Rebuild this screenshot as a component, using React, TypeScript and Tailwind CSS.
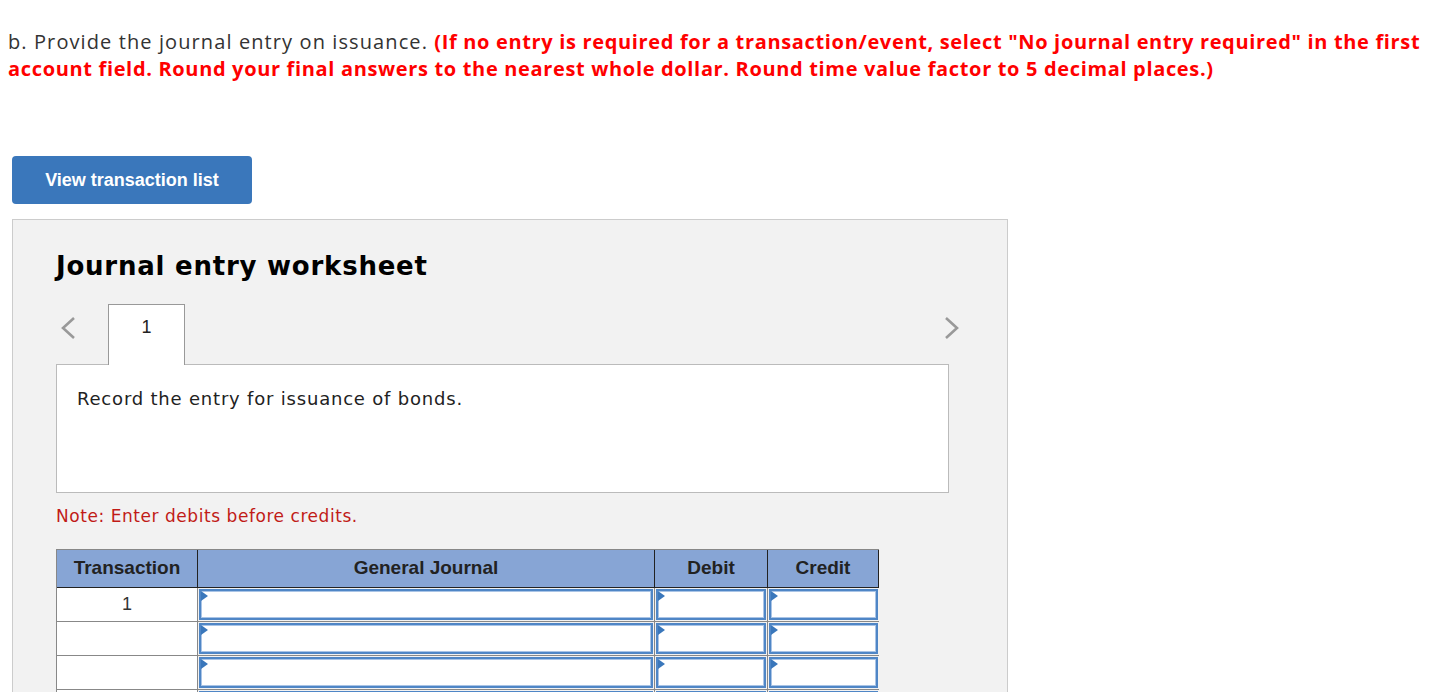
import React from "react";

const Tri = () => (
  <div className="absolute left-0 top-0 w-0 h-0 border-y-[5px] border-y-transparent border-l-[7px] border-l-[#3a77bb]" />
);

const InputCell = ({ w }: { w: string }) => (
  <div className={`${w} h-full border-l border-[#888] p-px`}>
    <div className="relative h-full bg-white border-2 border-[#4f86c6] shadow-[inset_0_0_0_1px_#a9c4e6]">
      <Tri />
    </div>
  </div>
);

const Row = ({ n }: { n?: string }) => (
  <div className="flex h-[34px] border-b border-[#888]">
    <div className="w-[140px] shrink-0 bg-white flex items-center justify-center text-[18px] text-[#333]" style={{ fontFamily: "'Liberation Sans', Arial, sans-serif" }}>
      {n}
    </div>
    <InputCell w="w-[457px] shrink-0" />
    <InputCell w="w-[113px] shrink-0" />
    <InputCell w="w-[112px] shrink-0" />
  </div>
);

export default function App() {
  return (
    <div className="bg-white min-h-[692px] text-[#333]">
      <div className="pl-[8px] pr-0 pt-[28px] text-[20px] leading-[27px] w-[1430px]" style={{ fontFamily: "'Open Sans', sans-serif" }}>
        <span className="text-[#333] tracking-[1.1px]">b. Provide the journal entry on issuance. </span>
        <span className="text-[#f00] font-bold tracking-[0.66px]">
          (If no entry is required for a transaction/event, select "No journal entry required" in the first account field. Round your final answers to the nearest whole dollar. Round time value factor to 5 decimal places.)
        </span>
      </div>

      <div className="pl-[12px] mt-[74px]">
        <button className="w-[240px] h-[48px] rounded-[4px] bg-[#3a77bb] text-white font-bold text-[18px]" style={{ fontFamily: "'Liberation Sans', Arial, sans-serif" }}>
          View transaction list
        </button>
      </div>

      <div className="ml-[12px] mt-[15px] w-[996px] bg-[#f2f2f2] border border-[#ccc] pl-[43px] pt-[31px] pb-[20px]" style={{ fontFamily: "'DejaVu Sans', Verdana, sans-serif" }}>
        <div className="text-[26px] leading-[30px] font-bold text-black tracking-[0.77px]">Journal entry worksheet</div>

        <div className="flex items-end mt-[23px] w-[908px] h-[61px]">
          <div className="w-[52px] h-full flex items-center pl-[4px] pb-[14px]">
            <svg width="16" height="24" viewBox="0 0 16 24">
              <polyline points="14,2 3,12 14,22" fill="none" stroke="#999" strokeWidth="2.6" />
            </svg>
          </div>
          <div className="w-[77px] h-[61px] bg-white border border-b-0 border-[#999] flex justify-center pt-[10px] text-[18px] leading-[24px] text-[#222]" style={{ fontFamily: "'Liberation Sans', Arial, sans-serif" }}>
            1
          </div>
          <div className="flex-1" />
          <div className="w-[20px] h-full flex items-center pb-[14px]">
            <svg width="16" height="24" viewBox="0 0 16 24">
              <polyline points="2,2 13,12 2,22" fill="none" stroke="#999" strokeWidth="2.6" />
            </svg>
          </div>
        </div>

        <div className="-mt-px w-[893px] h-[129px] bg-white border border-[#bbb] pl-[20px] pt-[22px] text-[18px] leading-[24px] text-[#222] tracking-[0.8px]">
          Record the entry for issuance of bonds.
        </div>

        <div className="mt-[12px] text-[17px] leading-[22px] text-[#c11b17] tracking-[0.55px]">Note: Enter debits before credits.</div>

        <div className="mt-[22px] w-[823px] border-l border-t border-[#888]">
          <div className="flex h-[38px] bg-[#87a5d5] border-b border-[#222] font-bold text-[19px] text-[#222]" style={{ fontFamily: "'Liberation Sans', Arial, sans-serif" }}>
            <div className="w-[140px] shrink-0 flex items-center justify-center">Transaction</div>
            <div className="w-[457px] shrink-0 flex items-center justify-center border-l border-[#222]">General Journal</div>
            <div className="w-[113px] shrink-0 flex items-center justify-center border-l border-[#222]">Debit</div>
            <div className="w-[112px] shrink-0 flex items-center justify-center border-l border-[#222] border-r">Credit</div>
          </div>
          <Row n="1" />
          <Row />
          <Row />
          <Row />
        </div>
      </div>
    </div>
  );
}
